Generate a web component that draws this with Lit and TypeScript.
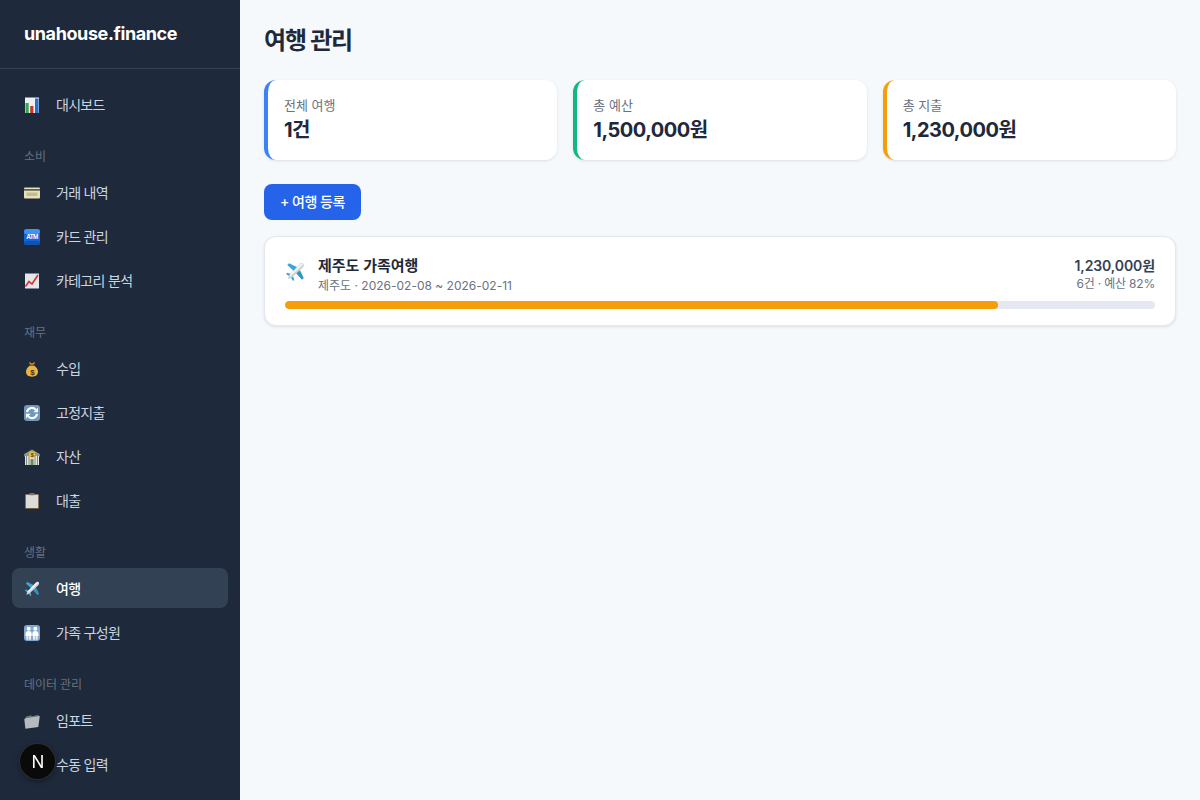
import { LitElement, html, css, svg } from "lit";
import { customElement } from "lit/decorators.js";

const ICONS: Record<string, unknown> = {
  chart: svg`<rect x="1" y="0.5" width="14" height="15.5" fill="#eef1f4"/><rect x="1.5" y="6" width="3.2" height="10" fill="#2fa84f"/><rect x="6.2" y="9" width="3.2" height="7" fill="#d0322d"/><rect x="11" y="1.5" width="3.6" height="14.5" fill="#2b6fc9"/>`,
  card: svg`<rect x="0" y="2.5" width="16" height="11" rx="1" fill="#e6e0bd"/><rect x="0" y="4.2" width="16" height="1.4" fill="#45412f"/><rect x="2.5" y="7.5" width="11" height="3.5" fill="#c6bd8c"/>`,
  atm: svg`<rect x="0" y="0" width="16" height="16" rx="3" fill="#1565d8"/><rect x="0" y="0" width="16" height="5" rx="2.5" fill="#3f93f0"/><rect x="0" y="12" width="16" height="4" rx="2" fill="#0f52b5"/><text x="8" y="10.4" text-anchor="middle" font-family="Liberation Sans, sans-serif" font-size="6.4" font-weight="700" fill="#fff">ATM</text>`,
  trend: svg`<rect x="1" y="0.5" width="14" height="15" fill="#e4e7ea"/><path d="M1.5 13.5 5 8.5l3 2.5 6-9" fill="none" stroke="#d8322c" stroke-width="1.6"/>`,
  money: svg`<path d="M4.8 .8 8 2.300 11.200 .8 9.800 4.300H6.200z" fill="#b8832b"/><path d="M6 4.500h4c2.300 1.700 4 3.800 4 6.300 0 3.200-2.500 4.900-6 4.900s-6-1.700-6-4.900c0-2.500 1.700-4.600 4-6.300z" fill="#e9b543"/><rect x="5.800" y="3.800" width="4.400" height="1.100" fill="#7a4f1d"/><text x="8" y="13.500" text-anchor="middle" font-family="Liberation Sans, sans-serif" font-size="8" font-weight="700" fill="#40301a">$</text>`,
  cycle: svg`<rect x="0" y="0" width="16" height="16" rx="3" fill="#6f98bd"/><path d="M3 7.200a5 5 0 0 1 9-2.200" fill="none" stroke="#fff" stroke-width="2.100"/><path d="M14 2.600v4.600H9.400z" fill="#fff"/><path d="M13 8.800a5 5 0 0 1-9 2.200" fill="none" stroke="#fff" stroke-width="2.100"/><path d="M2 13.400V8.800h4.600z" fill="#fff"/>`,
  bank: svg`<path d="M8 .5 15.800 5v2.500H.2V5z" fill="#8d9a86"/><rect x="1" y="7" width="14" height="9.500" fill="#e7e5dc"/><path d="M2.500 7v9.500M5 7v9.500M11 7v9.500M13.500 7v9.500" stroke="#7f8a86" stroke-width="1"/><rect x="6.500" y="10" width="3" height="6.500" fill="#6d8b5a"/><circle cx="8" cy="5.500" r="3.200" fill="#e8b93c"/><text x="8" y="7.600" text-anchor="middle" font-family="Liberation Sans, sans-serif" font-size="5.500" font-weight="700" fill="#5a4412">$</text>`,
  board: svg`<rect x="1" y="1" width="14" height="15.500" rx="1" fill="#75593f"/><rect x="1.800" y="1.800" width="12.400" height="13.200" fill="#dcdcd9"/><rect x="5.500" y="0" width="5" height="2.300" rx=".6" fill="#77746e"/>`,
  plane: svg`<path d="M1.800 2.400 3.300 1l6.600 3.200-2.700 3.100z" fill="#3aa7d6"/><path d="M13.600 14.200 15 12.700l-3.200-6.600-3.100 2.700z" fill="#2f95c6"/><path d="M.8 9.500 1.800 8.600l3 1-1.300 1.800zM6.500 15.200l.9-1-1-3-1.800 1.300z" fill="#3aa7d6"/><path d="M14.700 1.300c-.8-.8-2.300-.4-3.300.6L3.200 10.800 2.300 13.700 5.200 12.800l8.900-8.200c1-1 1.400-2.500.6-3.300z" fill="#c9d1d7"/><path d="M14.500 1.500c-.8-.6-2.100-.2-3 .7L3.400 10.700l.9.900 8.700-8c.9-.8 1.700-1.500 1.500-2.100z" fill="#eef1f3"/>`,
  family: svg`<rect x="0" y="0" width="16" height="16" rx="3" fill="#84a6c8"/><circle cx="4.700" cy="3.800" r="2" fill="#fff"/><circle cx="11.300" cy="3.800" r="2" fill="#fff"/><path d="M1.500 9c0-2 1.300-3 3.200-3s3 1 3 3v2h-6.200zM8.300 9c0-2 1.100-3 3-3s3.200 1 3.200 3v2H8.300z" fill="#fff"/><path d="M2.400 11h2v3.800h-2zM5 11h2v3.800H5zM9 11h2v3.800H9zM11.600 11h2v3.800h-2z" fill="#e8eef4"/>`,
  folder: svg`<path d="M1.500 3.800 7 2.300l1 1 6.800-1.500-.5 2.500-12.500 2z" fill="#6c7278"/><path d="M1.400 5.200 15.800 3l-1.500 11-12.900 1.700L.3 6.200z" fill="#b5babe"/>`,
};

const icon = (name: string, size = 16) =>
  html`<svg class="ico" width=${size} height=${size} viewBox="0 0 16 16">${ICONS[name]}</svg>`;

const NAV = [
  { items: [{ icon: "chart", label: "대시보드" }] },
  {
    title: "소비",
    items: [
      { icon: "card", label: "거래 내역" },
      { icon: "atm", label: "카드 관리" },
      { icon: "trend", label: "카테고리 분석" },
    ],
  },
  {
    title: "재무",
    items: [
      { icon: "money", label: "수입" },
      { icon: "cycle", label: "고정지출" },
      { icon: "bank", label: "자산" },
      { icon: "board", label: "대출" },
    ],
  },
  {
    title: "생활",
    items: [
      { icon: "plane", label: "여행", active: true },
      { icon: "family", label: "가족 구성원" },
    ],
  },
  {
    title: "데이터 관리",
    items: [
      { icon: "folder", label: "임포트" },
      { icon: "board", label: "수동 입력" },
    ],
  },
];

const STATS = [
  { label: "전체 여행", value: "1건", color: "#3b82f6" },
  { label: "총 예산", value: "1,500,000원", color: "#10b981" },
  { label: "총 지출", value: "1,230,000원", color: "#f59e0b" },
];

@customElement("app-root")
export class AppRoot extends LitElement {
  static styles = css`
    :host {
      display: flex;
      height: 800px;
      overflow: hidden;
      background: #f6f9fc;
      font-family: Inter, "Noto Sans CJK KR", sans-serif;
      color: #1e293b;
    }

    .sidebar {
      width: 240px;
      flex: none;
      background: #1e293b;
      overflow: hidden;
    }

    .logo {
      height: 69px;
      box-sizing: border-box;
      padding: 0 24px 2px;
      display: flex;
      align-items: center;
      font-size: 18px;
      font-weight: 700;
      letter-spacing: -0.4px;
      color: #fff;
      border-bottom: 1px solid #334155;
    }

    .nav {
      padding: 15px 12px 0;
    }

    .group {
      display: flex;
      flex-direction: column;
      gap: 4px;
    }

    .group-title {
      height: 48px;
      box-sizing: border-box;
      padding: 24px 12px 0;
      margin-bottom: -4px;
      font-size: 12px;
      line-height: 17px;
      letter-spacing: -0.1px;
      color: #667180;
    }

    .item {
      height: 40px;
      display: flex;
      align-items: center;
      gap: 16px;
      padding: 0 12px;
      border-radius: 8px;
      font-size: 14px;
      letter-spacing: -0.7px;
      color: #cbd5e1;
    }

    .item.active {
      background: #334155;
      color: #fff;
      font-weight: 500;
    }

    .ico {
      flex: none;
      display: block;
    }

    .item .ico {
      margin-top: 2px;
    }

    .main {
      flex: 1;
      min-width: 0;
      padding: 24px;
    }

    h1 {
      margin: 0 0 22px;
      font-size: 24px;
      line-height: 34px;
      font-weight: 700;
      letter-spacing: -1.2px;
    }

    .stats {
      display: grid;
      grid-template-columns: repeat(3, 1fr);
      gap: 16px;
      margin-bottom: 24px;
    }

    .stat {
      height: 80px;
      box-sizing: border-box;
      padding: 16px;
      background: #fff;
      border-left: 4px solid;
      border-radius: 12px;
      box-shadow: 0 1px 3px rgba(0, 0, 0, 0.1);
    }

    .stat-label {
      margin-bottom: 1px;
      font-size: 13px;
      line-height: 19px;
      color: #6b7280;
    }

    .stat-value {
      font-size: 20px;
      line-height: 29px;
      font-weight: 700;
      letter-spacing: -0.5px;
    }

    .add {
      display: block;
      height: 36px;
      padding: 0 16px 2px;
      margin-bottom: 16px;
      border: 0;
      border-radius: 8px;
      background: #2563eb;
      color: #fff;
      font: inherit;
      font-size: 14px;
      font-weight: 500;
      letter-spacing: -0.5px;
    }

    .trip {
      height: 90px;
      box-sizing: border-box;
      padding: 18px 20px 0;
      background: #fff;
      border: 1px solid #e2e8f0;
      border-radius: 12px;
      box-shadow: 0 1px 3px rgba(0, 0, 0, 0.1);
    }

    .trip-head {
      display: flex;
      align-items: flex-start;
      gap: 13px;
      margin-bottom: 7px;
    }

    .trip-head .ico {
      margin-top: 7px;
    }

    .trip-info {
      flex: 1;
    }

    .trip-name {
      margin-bottom: 1px;
      font-size: 15px;
      line-height: 22px;
      font-weight: 600;
    }

    .trip-meta {
      font-size: 12px;
      line-height: 16px;
      color: #6b7280;
    }

    .trip-sum {
      text-align: right;
    }

    .trip-total {
      font-size: 14px;
      line-height: 22px;
      font-weight: 600;
      letter-spacing: -0.1px;
      color: #334155;
    }

    .trip-sum .trip-meta {
      margin-top: -1px;
      letter-spacing: -0.2px;
    }

    .bar {
      height: 8px;
      border-radius: 4px;
      background: #e5e8f0;
      overflow: hidden;
    }

    .fill {
      height: 100%;
      border-radius: 4px;
      background: #f59e0b;
    }

    .next {
      position: fixed;
      left: 20px;
      top: 744px;
      width: 35px;
      height: 35px;
      box-sizing: border-box;
      padding-left: 1px;
      border-radius: 50%;
      background: #0a0a0a;
      box-shadow: 0 0 0 1px #2c2f33, 0 2px 6px rgba(0, 0, 0, 0.4);
      display: flex;
      align-items: center;
      justify-content: center;
      color: #fff;
      font-size: 17px;
      font-weight: 400;
    }
  `;

  render() {
    return html`
      <aside class="sidebar">
        <div class="logo">unahouse.finance</div>
        <nav class="nav">
          ${NAV.map(
            (group) => html`
              <div class="group">
                ${group.title
                  ? html`<div class="group-title">${group.title}</div>`
                  : ""}
                ${group.items.map(
                  (item: any) => html`
                    <div class="item ${item.active ? "active" : ""}">
                      ${icon(item.icon)}<span>${item.label}</span>
                    </div>
                  `,
                )}
              </div>
            `,
          )}
        </nav>
      </aside>
      <main class="main">
        <h1>여행 관리</h1>
        <div class="stats">
          ${STATS.map(
            (s) => html`
              <div class="stat" style="border-left-color: ${s.color}">
                <div class="stat-label">${s.label}</div>
                <div class="stat-value">${s.value}</div>
              </div>
            `,
          )}
        </div>
        <button class="add">+ 여행 등록</button>
        <div class="trip">
          <div class="trip-head">
            ${icon("plane", 20)}
            <div class="trip-info">
              <div class="trip-name">제주도 가족여행</div>
              <div class="trip-meta">제주도 · 2026-02-08 ~ 2026-02-11</div>
            </div>
            <div class="trip-sum">
              <div class="trip-total">1,230,000원</div>
              <div class="trip-meta">6건 · 예산 82%</div>
            </div>
          </div>
          <div class="bar"><div class="fill" style="width: 82%"></div></div>
        </div>
      </main>
      <div class="next">N</div>
    `;
  }
}
